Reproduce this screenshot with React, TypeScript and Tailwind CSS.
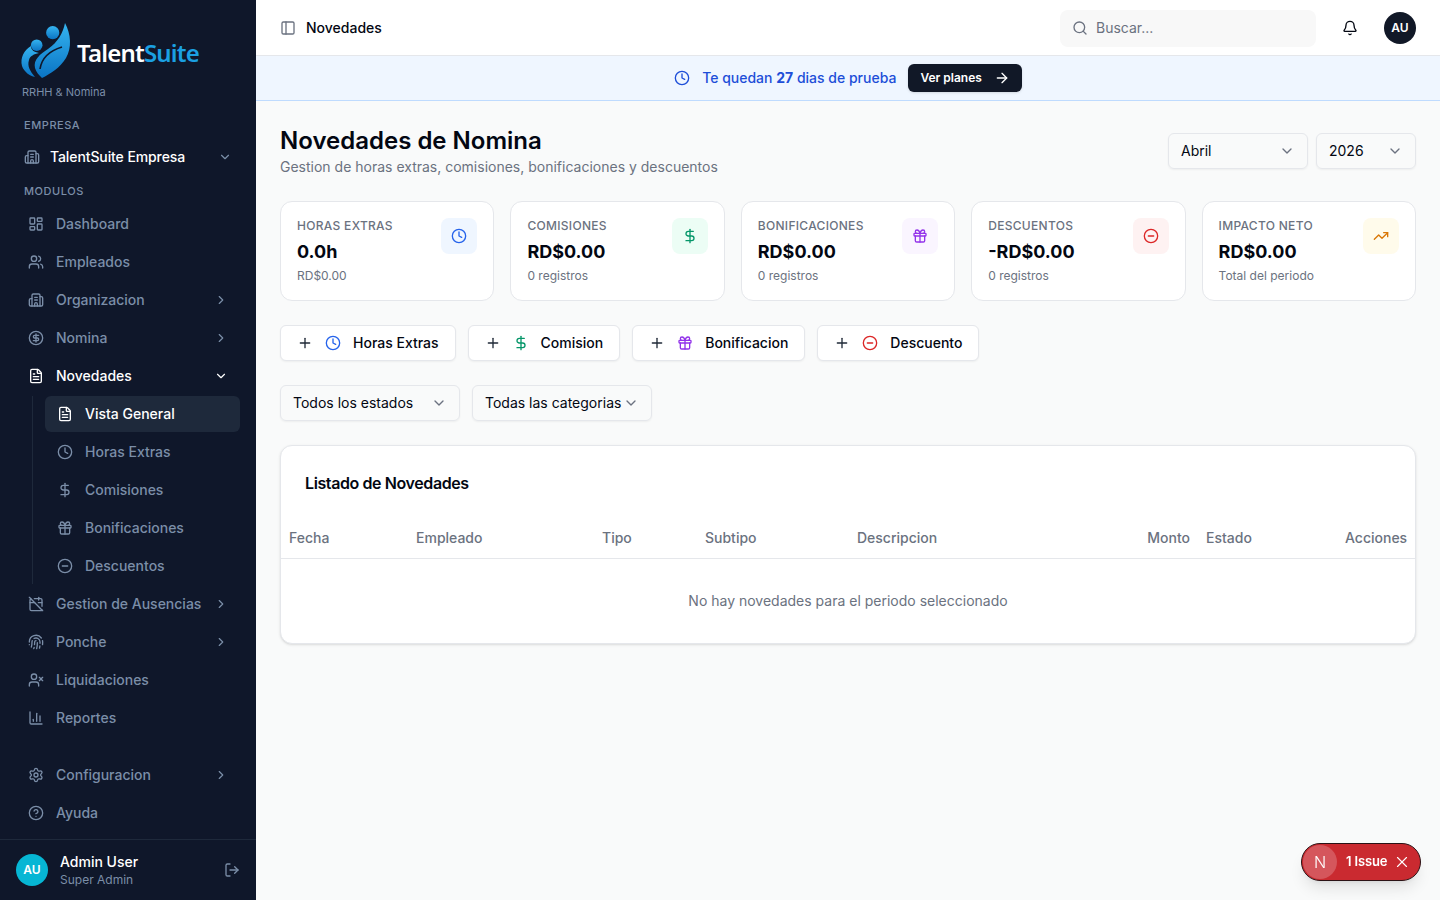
import React from "react";
import {
  ArrowRight,
  Bell,
  Building2,
  ChartColumn,
  ChevronDown,
  ChevronRight,
  CircleDollarSign,
  CircleHelp,
  CircleMinus,
  Clock,
  DollarSign,
  FileText,
  Fingerprint,
  Gift,
  LayoutDashboard,
  CalendarOff,
  LogOut,
  PanelLeft,
  Plus,
  Search,
  Settings,
  TrendingUp,
  Users,
  UserX,
  X,
} from "lucide-react";

const NavItem = ({ icon: Icon, label, arrow, active }: { icon: any; label: string; arrow?: "right" | "down"; active?: boolean }) => (
  <div className={`flex h-9 items-center gap-3 rounded-md px-3 text-sm font-medium ${active ? "text-white" : "text-[#7b8ea8]"}`}>
    <Icon className="size-4 shrink-0" />
    <span className="flex-1 whitespace-nowrap">{label}</span>
    {arrow === "right" && <ChevronRight className="size-[14px] shrink-0" />}
    {arrow === "down" && <ChevronDown className="size-[14px] shrink-0" />}
  </div>
);

const SubItem = ({ icon: Icon, label, active }: { icon: any; label: string; active?: boolean }) => (
  <div className={`flex h-9 items-center gap-3 rounded-md px-3 text-sm font-medium ${active ? "bg-[#1e293b] text-white" : "text-[#7b8ea8]"}`}>
    <Icon className="size-4 shrink-0" />
    <span>{label}</span>
  </div>
);

const Logo = () => (
  <svg width="52" height="58" viewBox="20 21 52 58" className="shrink-0">
    <defs>
      <linearGradient id="logoBlue" x1="0" y1="0" x2="0" y2="1">
        <stop offset="0" stopColor="#35b4f0" />
        <stop offset="1" stopColor="#0a74c4" />
      </linearGradient>
    </defs>
    <circle cx="52.7" cy="32.7" r="6.6" fill="url(#logoBlue)" />
    <circle cx="36.7" cy="45.2" r="5.8" fill="url(#logoBlue)" />
    <path d="M31 46C24 50 20 58 22 66C24 72 30 76 35 77C30 71 27 66 29 60C30 56 34 54 39 53C34 52 31 50 31 46Z" fill="url(#logoBlue)" />
    <path d="M65 23C63 33 58 42 48 49C40 54 33 60 35 68C36 72 39 75 42 78C50 74 60 68 66 58C72 48 71 34 65 23Z" fill="url(#logoBlue)" />
    <path d="M62 47C52 50 42 56 40 69" fill="none" stroke="#0f172a" strokeWidth="1.6" />
  </svg>
);

const Sidebar = () => (
  <aside className="flex h-full w-64 shrink-0 flex-col bg-[#0f172a]">
    <div className="pl-5 pt-[21px]">
      <div className="flex h-[58px] items-center">
        <Logo />
        <span className="ml-[5px] mt-[6px] font-['Noto_Sans',sans-serif] text-[24px] font-semibold tracking-[-0.8px] text-white">
          Talent<span className="text-[#1ba0e2]">Suite</span>
        </span>
      </div>
      <p className="ml-[2px] mt-[5px] text-[11px] leading-[16px] text-[#7b8ea8]">RRHH &amp; Nomina</p>
    </div>
    <p className="mt-[17px] px-6 text-[11px] font-medium leading-4 tracking-[0.55px] text-[#7b8ea8]">EMPRESA</p>
    <div className="mt-[6px] flex h-9 items-center px-6 text-sm font-medium tracking-[-0.1px] text-white">
      <Building2 className="mr-[10px] size-4 text-[#7b8ea8]" />
      <span className="flex-1">TalentSuite Empresa</span>
      <ChevronDown className="size-[14px] text-[#7b8ea8]" />
    </div>
    <p className="mt-[8px] px-6 text-[11px] font-medium leading-4 tracking-[0.55px] text-[#7b8ea8]">MODULOS</p>
    <nav className="mt-[7px] flex flex-col gap-[2px] px-4">
      <NavItem icon={LayoutDashboard} label="Dashboard" />
      <NavItem icon={Users} label="Empleados" />
      <NavItem icon={Building2} label="Organizacion" arrow="right" />
      <NavItem icon={CircleDollarSign} label="Nomina" arrow="right" />
      <NavItem icon={FileText} label="Novedades" arrow="down" active />
      <div className="ml-4 flex flex-col gap-[2px] border-l border-[#1e293b] pl-3">
        <SubItem icon={FileText} label="Vista General" active />
        <SubItem icon={Clock} label="Horas Extras" />
        <SubItem icon={DollarSign} label="Comisiones" />
        <SubItem icon={Gift} label="Bonificaciones" />
        <SubItem icon={CircleMinus} label="Descuentos" />
      </div>
      <NavItem icon={CalendarOff} label="Gestion de Ausencias" arrow="right" />
      <NavItem icon={Fingerprint} label="Ponche" arrow="right" />
      <NavItem icon={UserX} label="Liquidaciones" />
      <NavItem icon={ChartColumn} label="Reportes" />
    </nav>
    <div className="mt-auto flex flex-col gap-[2px] px-4 pb-2">
      <NavItem icon={Settings} label="Configuracion" arrow="right" />
      <NavItem icon={CircleHelp} label="Ayuda" />
    </div>
    <div className="flex h-[61px] items-center gap-3 border-t border-[#1e293b] px-4">
      <div className="flex size-8 items-center justify-center rounded-full bg-[#06b6d4] text-xs font-semibold text-white">AU</div>
      <div className="flex-1">
        <p className="text-sm font-medium leading-[20px] text-white">Admin User</p>
        <p className="text-xs leading-4 text-[#7b8ea8]">Super Admin</p>
      </div>
      <LogOut className="size-4 text-[#7b8ea8]" />
    </div>
  </aside>
);

const StatCard = ({ label, value, sub, icon: Icon, box, color }: { label: string; value: string; sub: string; icon: any; box: string; color: string }) => (
  <div className="flex h-[100px] items-start justify-between rounded-xl border border-[#e5e7eb] bg-white p-4">
    <div>
      <p className="text-xs font-medium uppercase leading-4 tracking-[0.3px] text-[#6b7280]">{label}</p>
      <p className="mt-1 text-lg font-bold leading-7 text-[#030712]">{value}</p>
      <p className="mt-[2px] text-xs leading-4 text-[#6b7280]">{sub}</p>
    </div>
    <div className={`flex size-9 items-center justify-center rounded-lg ${box}`}>
      <Icon className={`size-4 ${color}`} />
    </div>
  </div>
);

const ActionButton = ({ icon: Icon, label, color }: { icon: any; label: string; color: string }) => (
  <button className="flex h-9 items-center gap-3 rounded-md border border-[#e5e7eb] bg-white px-4 text-sm font-medium text-[#030712] shadow-xs">
    <Plus className="size-4 text-[#1f2937]" />
    <Icon className={`size-4 ${color}`} />
    <span>{label}</span>
  </button>
);

const Select = ({ label, width }: { label: string; width: string }) => (
  <div className={`flex h-9 items-center justify-between rounded-md border border-[#e5e7eb] pl-3 pr-3 text-sm text-[#030712] shadow-xs ${width}`}>
    <span>{label}</span>
    <ChevronDown className="size-4 text-[#6b7280]" />
  </div>
);

export default function App() {
  return (
    <div className="flex h-screen overflow-hidden bg-[#f9fafa] font-['Inter',sans-serif]">
      <Sidebar />
      <div className="flex min-w-0 flex-1 flex-col">
        <header className="flex h-[56px] shrink-0 items-center border-b border-[#e5e7eb] bg-white pl-6 pr-6">
          <PanelLeft className="size-4 text-[#6b7280]" />
          <span className="ml-[10px] text-sm font-medium text-[#030712]">Novedades</span>
          <div className="ml-auto mt-[1px] flex h-[37px] w-64 items-center gap-2 rounded-lg bg-[#f8f8f8] px-3 text-sm text-[#6b7280]">
            <Search className="size-4" />
            <span>Buscar...</span>
          </div>
          <Bell className="ml-[26px] size-4 text-[#030712]" />
          <div className="ml-[26px] flex size-8 items-center justify-center rounded-full bg-[#111827] text-xs font-semibold text-white">AU</div>
        </header>
        <div className="flex h-[45px] shrink-0 items-center justify-center gap-3 border-b border-[#bfdbfe] bg-[#eff6ff]">
          <Clock className="size-4 text-[#1d4ed8]" />
          <p className="text-sm font-medium text-[#1d4ed8]">
            Te quedan <span className="font-bold">27</span> dias de prueba
          </p>
          <button className="flex h-7 items-center gap-3 rounded-md bg-[#111827] px-3 text-xs font-semibold text-white shadow-sm">
            Ver planes
            <ArrowRight className="size-4" />
          </button>
        </div>
        <main className="flex-1 px-6 pt-6">
          <div className="flex items-start justify-between">
            <div>
              <h1 className="text-2xl font-semibold leading-8 text-[#030712]">Novedades de Nomina</h1>
              <p className="text-sm leading-5 text-[#6b7280]">Gestion de horas extras, comisiones, bonificaciones y descuentos</p>
            </div>
            <div className="mt-2 flex gap-2">
              <Select label="Abril" width="w-[140px]" />
              <Select label="2026" width="w-[100px]" />
            </div>
          </div>
          <div className="mt-6 grid grid-cols-5 gap-4">
            <StatCard label="Horas Extras" value="0.0h" sub="RD$0.00" icon={Clock} box="bg-[#eff6ff]" color="text-[#2563eb]" />
            <StatCard label="Comisiones" value="RD$0.00" sub="0 registros" icon={DollarSign} box="bg-[#ecfdf5]" color="text-[#059669]" />
            <StatCard label="Bonificaciones" value="RD$0.00" sub="0 registros" icon={Gift} box="bg-[#faf5ff]" color="text-[#9333ea]" />
            <StatCard label="Descuentos" value="-RD$0.00" sub="0 registros" icon={CircleMinus} box="bg-[#fef2f2]" color="text-[#dc2626]" />
            <StatCard label="Impacto Neto" value="RD$0.00" sub="Total del periodo" icon={TrendingUp} box="bg-[#fffbeb]" color="text-[#d97706]" />
          </div>
          <div className="mt-6 flex gap-3">
            <ActionButton icon={Clock} label="Horas Extras" color="text-[#2563eb]" />
            <ActionButton icon={DollarSign} label="Comision" color="text-[#059669]" />
            <ActionButton icon={Gift} label="Bonificacion" color="text-[#9333ea]" />
            <ActionButton icon={CircleMinus} label="Descuento" color="text-[#dc2626]" />
          </div>
          <div className="mt-6 flex gap-3">
            <Select label="Todos los estados" width="w-[180px]" />
            <Select label="Todas las categorias" width="w-[180px]" />
          </div>
          <div className="mt-6 rounded-xl border border-[#e5e7eb] bg-white shadow-sm">
            <h2 className="px-6 pb-[23px] pt-[25px] text-base font-semibold leading-6 tracking-tight text-[#030712]">Listado de Novedades</h2>
            <table className="w-full table-fixed text-sm">
              <thead>
                <tr className="h-10 border-b border-[#e5e7eb] text-[#6b7280]">
                  <th className="w-[127px] px-2 text-left font-medium">Fecha</th>
                  <th className="w-[186px] px-2 text-left font-medium">Empleado</th>
                  <th className="w-[103px] px-2 text-left font-medium">Tipo</th>
                  <th className="w-[152px] px-2 text-left font-medium">Subtipo</th>
                  <th className="w-[290px] px-2 text-left font-medium">Descripcion</th>
                  <th className="w-[59px] px-2 text-right font-medium">Monto</th>
                  <th className="px-2 text-left font-medium">Estado</th>
                  <th className="w-[78px] px-2 text-right font-medium">Acciones</th>
                </tr>
              </thead>
              <tbody>
                <tr>
                  <td colSpan={8} className="h-[85px] text-center text-[#6b7280]">No hay novedades para el periodo seleccionado</td>
                </tr>
              </tbody>
            </table>
          </div>
        </main>
      </div>
      <div className="fixed bottom-[19px] right-[19px] flex h-[38px] w-[120px] items-center rounded-full border border-[#2b1215] bg-[#ca2a30] pl-[1px] pr-[9px] text-white shadow-lg">
        <div className="flex size-[34px] items-center justify-center rounded-full bg-[#d5565c] text-base font-light">N</div>
        <span className="ml-[9px] text-[13px] font-semibold tracking-[-0.15px]">1 Issue</span>
        <X className="ml-auto size-[18px]" strokeWidth={1.5} />
      </div>
    </div>
  );
}
